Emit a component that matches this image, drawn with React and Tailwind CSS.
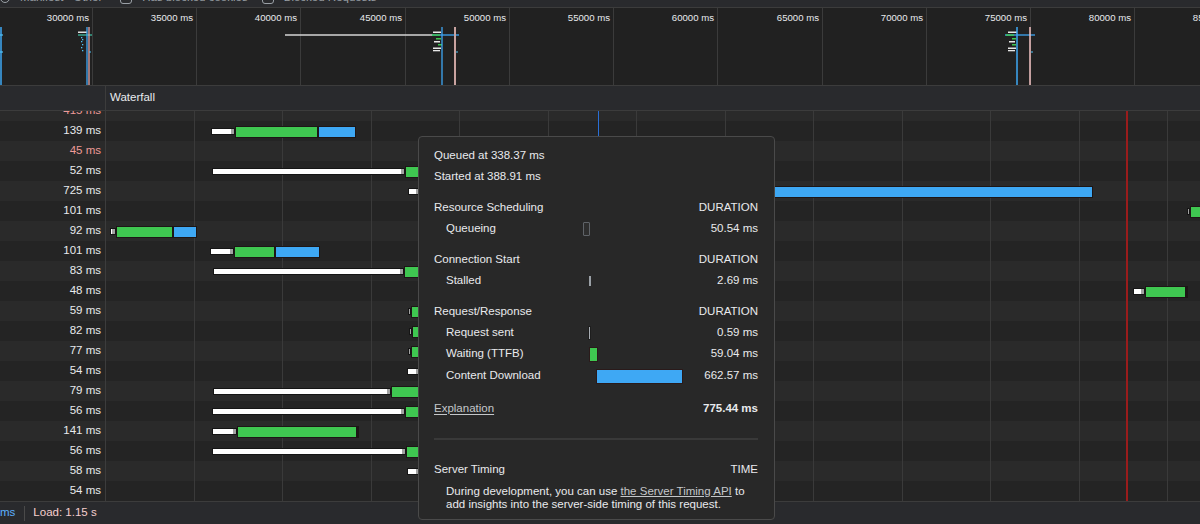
import React from 'react'

const w = (a, b) => ({ type: 'wait', a, b })
const g = (a, b) => ({ type: 'ttfb', a, b })
const d = (a, b) => ({ type: 'down', a, b })

const rows = [
  { t: '415 ms', red: true, bars: [] },
  { t: '139 ms', bars: [w(211, 235), g(235, 318), d(318, 356)] },
  { t: '45 ms', red: true, bars: [] },
  { t: '52 ms', bars: [w(212, 405), g(405, 420)] },
  { t: '725 ms', bars: [w(408, 420), d(420, 1093)] },
  { t: '101 ms', bars: [w(1187, 1190), g(1190, 1204)] },
  { t: '92 ms', bars: [w(110, 116), g(116, 173), d(173, 197)] },
  { t: '101 ms', bars: [w(210, 234), g(234, 275), d(275, 320)] },
  { t: '83 ms', bars: [w(213, 404), g(404, 420)] },
  { t: '48 ms', bars: [w(1133, 1145), g(1145, 1186), d(1186, 1187)] },
  { t: '59 ms', bars: [w(408, 411), g(411, 420)] },
  { t: '82 ms', bars: [w(409, 412), g(412, 420)] },
  { t: '77 ms', bars: [w(408, 411), g(411, 420)] },
  { t: '54 ms', bars: [w(407, 420)] },
  { t: '79 ms', bars: [w(213, 391), g(391, 420)] },
  { t: '56 ms', bars: [w(212, 405), g(405, 420)] },
  { t: '141 ms', bars: [w(212, 237), g(237, 357), d(357, 358)] },
  { t: '56 ms', bars: [w(212, 406), g(406, 420)] },
  { t: '58 ms', bars: [w(407, 420)] },
  { t: '54 ms', bars: [] },
]

const overviewLines = [92, 196, 300, 405, 509, 613, 717, 822, 926, 1030, 1134, 1238]
const waterfallLines = Array.from({ length: 12 }, (_, k) => 194 + 88.45 * k)

const Bar = ({ bar }) => {
  const style = { left: bar.a - 106, width: bar.b - bar.a }
  if (bar.type === 'wait') {
    return (
      <div
        className="absolute top-[7px] z-[2] flex h-[7px] justify-end border border-[#151515] bg-white"
        style={style}
      >
        <div className="h-full w-[3px] bg-[#a3a3a3]" />
      </div>
    )
  }
  return (
    <div
      className={`absolute top-[5px] z-[2] h-[12px] border border-[#1d1616] ${
        bar.type === 'ttfb' ? 'bg-[#3fc751]' : 'bg-[#3ea8f4]'
      }`}
      style={style}
    />
  )
}

const Overview = () => (
  <svg width="1200" height="77" className="block">
    {overviewLines.map((x, i) => (
      <g key={x}>
        <line x1={x + 0.5} x2={x + 0.5} y1="0" y2="77" stroke="#3b3b3b" />
        <text x={x - 3} y="12.5" textAnchor="end" fill="#e8eaed" fontSize="9.6">
          {30000 + i * 5000} ms
        </text>
      </g>
    ))}

    {/* cluster near 0 */}
    <line x1="1" x2="1" y1="19" y2="77" stroke="#3ea8f4" strokeWidth="1.5" />
    <line x1="0" x2="3" y1="27" y2="27" stroke="#4fc3f7" strokeWidth="1.2" />
    <line x1="0" x2="3" y1="44" y2="44" stroke="#4fc3f7" strokeWidth="1.2" />

    {/* cluster near 85 */}
    <rect x="78" y="23.5" width="9" height="1.5" fill="#e0e0e0" />
    <line x1="78" x2="92" y1="27" y2="27" stroke="#3fc7a8" strokeWidth="1.2" />
    {[29, 31, 33, 36, 39, 42].map((y, i) => (
      <rect key={y} x={i % 2 ? 82 : 81} y={y} width="1.3" height="1.3" fill="#4fc3f7" />
    ))}
    <line x1="87" x2="87" y1="19" y2="77" stroke="#3ea8f4" strokeWidth="1.3" />
    <line x1="89" x2="89" y1="19" y2="77" stroke="#e6a9a9" strokeWidth="1.3" />
    <line x1="89" x2="91" y1="44" y2="44" stroke="#4fc3f7" strokeWidth="1.2" />

    {/* long line + cluster near 445 */}
    <line x1="285" x2="433" y1="27" y2="27" stroke="#d4d4d4" strokeWidth="1.5" />
    <rect x="433" y="23.5" width="8" height="1.5" fill="#e8e8e8" />
    <line x1="432" x2="459" y1="27" y2="27" stroke="#3ea8f4" strokeWidth="1.3" />
    <rect x="432" y="26.3" width="8" height="1.5" fill="#3fc751" />
    <rect x="436" y="30" width="5" height="1.5" fill="#3fc751" />
    <rect x="434" y="33" width="6" height="1.5" fill="#e8e8e8" />
    <rect x="438" y="36" width="4" height="1.5" fill="#3fc751" />
    <rect x="433" y="39.5" width="8" height="1.5" fill="#e8e8e8" />
    <rect x="433" y="42" width="7" height="1.3" fill="#e8e8e8" />
    <line x1="442" x2="442" y1="19" y2="77" stroke="#3ea8f4" strokeWidth="1.3" />
    <line x1="455" x2="455" y1="19" y2="77" stroke="#c9a3a0" strokeWidth="2" />
    <line x1="456" x2="458" y1="44" y2="44" stroke="#4fc3f7" strokeWidth="1.2" />

    {/* cluster near 1020 */}
    <rect x="1008" y="23.5" width="9" height="1.5" fill="#e8e8e8" />
    <line x1="1005" x2="1035" y1="27" y2="27" stroke="#3ea8f4" strokeWidth="1.3" />
    <rect x="1006" y="26.3" width="8" height="1.5" fill="#3fc751" />
    <rect x="1012" y="30" width="4" height="1.5" fill="#3fc751" />
    <rect x="1009" y="33" width="6" height="1.5" fill="#e8e8e8" />
    <rect x="1012" y="36" width="4" height="1.5" fill="#3fc751" />
    <rect x="1008" y="39.5" width="8" height="1.5" fill="#e8e8e8" />
    <rect x="1008" y="42" width="7" height="1.3" fill="#e8e8e8" />
    <line x1="1017" x2="1017" y1="19" y2="77" stroke="#3ea8f4" strokeWidth="1.5" />
    <line x1="1030" x2="1030" y1="19" y2="77" stroke="#f4c4c4" strokeWidth="1.5" />
    <line x1="1031" x2="1033" y1="44" y2="44" stroke="#4fc3f7" strokeWidth="1.2" />
  </svg>
)

const SubRow = ({ label, value, children }) => (
  <div className="flex h-[21px] items-center pl-[12px]">
    <div className="w-[137px]">{label}</div>
    <div className="flex w-[110px] items-center">{children}</div>
    <div className="flex-1 text-right">{value}</div>
  </div>
)

const SectionHead = ({ title, right }) => (
  <div className="mt-[10px] flex h-[21px] items-center justify-between">
    <span>{title}</span>
    <span>{right}</span>
  </div>
)

const Tooltip = () => (
  <div className="absolute left-[418px] top-[136px] z-20 h-[384px] w-[357px] rounded-[4px] border border-[#4a4a4a] bg-[#282828] pl-[15px] pr-[16px] pt-[8px] text-[11.5px] text-[#e8eaed]">
    <div className="flex h-[21px] items-center">Queued at 338.37 ms</div>
    <div className="flex h-[21px] items-center">Started at 388.91 ms</div>

    <SectionHead title="Resource Scheduling" right="DURATION" />
    <SubRow label="Queueing" value="50.54 ms">
      <div className="h-[14px] w-[7px] rounded-[1px] border border-[#5f6368] bg-[#2e2e2e]" />
    </SubRow>

    <SectionHead title="Connection Start" right="DURATION" />
    <SubRow label="Stalled" value="2.69 ms">
      <div className="ml-[6px] h-[10px] w-[2px] bg-[#9aa0a6]" />
    </SubRow>

    <SectionHead title="Request/Response" right="DURATION" />
    <SubRow label="Request sent" value="0.59 ms">
      <div className="ml-[5px] h-[14px] w-[3px] border border-[#1e1e1e] bg-[#a8adb3]" />
    </SubRow>
    <div className="flex h-[22px] items-center pl-[12px]">
      <div className="w-[137px]">Waiting (TTFB)</div>
      <div className="flex w-[110px] items-center">
        <div className="ml-[6px] h-[15px] w-[9px] border border-[#2a1a1a] bg-[#3fc751]" />
      </div>
      <div className="flex-1 text-right">59.04 ms</div>
    </div>
    <div className="flex h-[22px] items-center pl-[12px]">
      <div className="w-[137px]">Content Download</div>
      <div className="flex w-[110px] items-center">
        <div className="ml-[13px] h-[15px] w-[87px] border border-[#2a1a1a] bg-[#3ea8f4]" />
      </div>
      <div className="flex-1 text-right">662.57 ms</div>
    </div>

    <div className="mt-[11px] flex h-[21px] items-center justify-between">
      <span className="text-[#c4c7ca] underline underline-offset-2">Explanation</span>
      <span className="font-bold">775.44 ms</span>
    </div>

    <div className="mt-[19px] h-[2px] bg-[#393939]" />

    <div className="mt-[19px] flex h-[21px] items-center justify-between">
      <span>Server Timing</span>
      <span>TIME</span>
    </div>
    <p className="mt-[5px] pl-[12px] leading-[13px]">
      During development, you can use{' '}
      <span className="text-[#c4c7ca] underline underline-offset-1">the Server Timing API</span> to
      <br />
      add insights into the server-side timing of this request.
    </p>
  </div>
)

export default function App() {
  return (
    <div className="relative h-[524px] w-[1200px] overflow-hidden bg-[#242424] font-['Liberation_Sans',Arial,sans-serif] text-[11.5px] text-[#e8eaed]">
      {/* clipped toolbar */}
      <div className="h-[8px] overflow-hidden border-b border-[#3c3c3c] bg-[#292a2d]">
        <div className="-mt-[10px] flex h-[16px] items-center gap-[10px] pl-[0px] text-[#9aa0a6]">
          <span className="h-[10px] w-[10px] rounded-full border border-[#9aa0a6]" />
          <span>Manifest</span>
          <span>Other</span>
          <span className="ml-[8px] h-[12px] w-[12px] rounded-[3px] border border-[#9aa0a6]" />
          <span>Has blocked cookies</span>
          <span className="ml-[4px] h-[12px] w-[12px] rounded-[3px] border border-[#9aa0a6]" />
          <span>Blocked Requests</span>
        </div>
      </div>

      {/* overview */}
      <div className="h-[78px] border-b border-[#3c3c3c] bg-[#212121]">
        <Overview />
      </div>

      {/* header */}
      <div className="flex h-[25px] border-b border-[#3c3c3c] bg-[#292a2d]">
        <div className="w-[106px] border-r border-[#3c3c3c]" />
        <div className="flex items-center pl-[4px]">Waterfall</div>
      </div>

      {/* rows */}
      <div className="relative h-[390px] overflow-hidden">
        <div className="-mt-[10px]">
          {rows.map((r, i) => (
            <div key={i} className={`flex h-[20px] ${i % 2 ? 'bg-[#242424]' : 'bg-[#2a2a2a]'}`}>
              <div
                className={`flex w-[106px] items-center justify-end border-r border-[#3c3c3c] pr-[4px] ${
                  r.red ? 'text-[#ee9b98]' : ''
                }`}
              >
                {r.t}
              </div>
              <div className="relative flex-1">
                {r.bars.map((b, j) => (
                  <Bar key={j} bar={b} />
                ))}
              </div>
            </div>
          ))}
        </div>

        {waterfallLines.map((x) => (
          <div
            key={x}
            className="absolute inset-y-0 z-[1] w-px bg-[#3a3a3a]"
            style={{ left: Math.round(x) }}
          />
        ))}
        <div className="absolute inset-y-0 left-[598px] z-[1] w-px bg-[#2a6fd6]" />
        <div className="absolute inset-y-0 left-[1126px] z-[1] w-[1.5px] bg-[#9a1c1c]" />
      </div>

      {/* summary bar */}
      <div className="flex h-[23px] items-center border-t border-[#3c3c3c] bg-[#292a2d]">
        <span className="text-[#5db0ff]">ms</span>
        <span className="ml-[9px] h-[15px] w-px bg-[#4a4a4a]" />
        <span className="ml-[8px] text-[#f5cfcf]">Load: 1.15 s</span>
      </div>

      <Tooltip />
    </div>
  )
}
